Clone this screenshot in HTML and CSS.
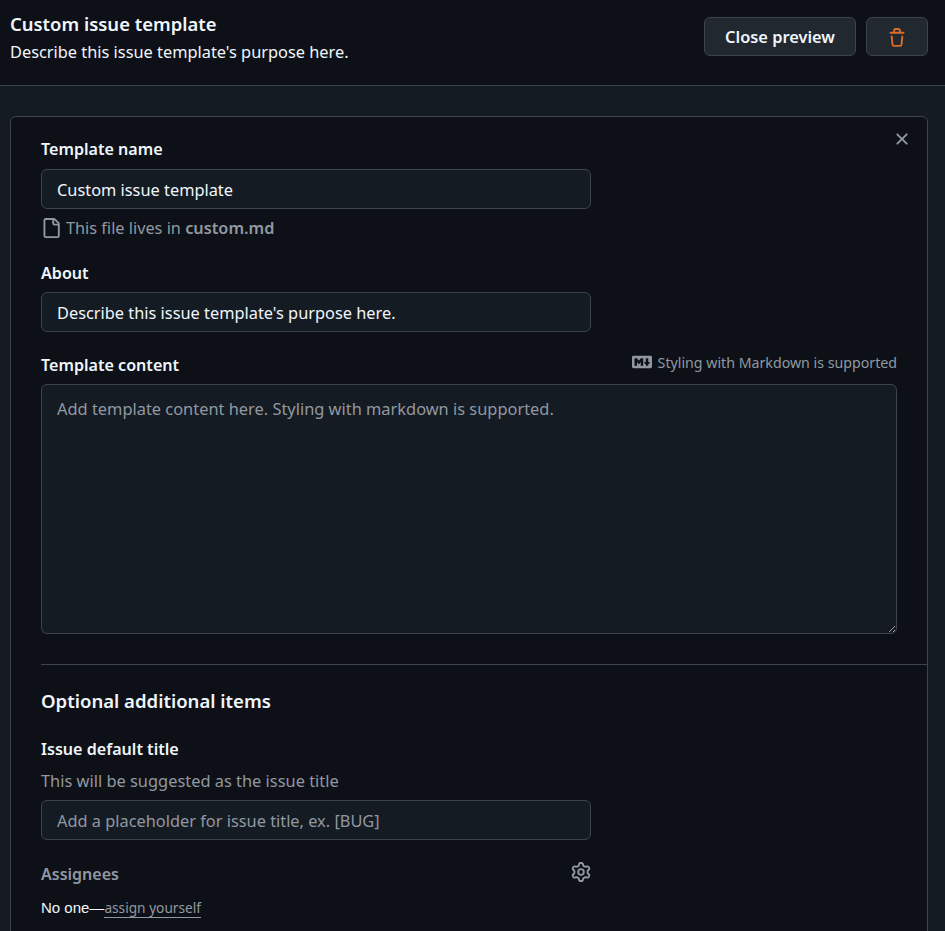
FILE: index.html
```html
<!DOCTYPE html>
<html lang="en">
<head>
  <meta charset="UTF-8" />
  <meta name="viewport" content="width=device-width, initial-scale=1.0" />
  <title>Custom issue template</title>
  <link rel="stylesheet" href="styles.css">
</head>
<body>

  <header class="top">
    <div class="top-text">
      <h1>Custom issue template</h1>
      <p>Describe this issue template's purpose here.</p>
    </div>
    <div class="top-actions">
      <button class="btn">Close preview</button>
      <button class="btn btn-trash" aria-label="Delete">
        <svg viewBox="0 0 16 16" width="20" height="20"><path d="M11 1.75V3h2.25a.75.75 0 0 1 0 1.5H2.75a.75.75 0 0 1 0-1.5H5V1.75C5 .784 5.784 0 6.75 0h2.5C10.216 0 11 .784 11 1.75ZM4.496 6.675l.66 6.6a.25.25 0 0 0 .249.225h5.19a.25.25 0 0 0 .249-.225l.66-6.6a.75.75 0 0 1 1.492.149l-.66 6.6A1.748 1.748 0 0 1 10.595 15h-5.19a1.75 1.75 0 0 1-1.741-1.575l-.66-6.6a.75.75 0 1 1 1.492-.15ZM6.5 1.75V3h3V1.75a.25.25 0 0 0-.25-.25h-2.5a.25.25 0 0 0-.25.25Z"/></svg>
      </button>
    </div>
  </header>

  <main class="inset">
    <form class="card">
      <button type="button" class="close" aria-label="Close">
        <svg viewBox="0 0 16 16" width="20" height="20"><path d="M3.72 3.72a.75.75 0 0 1 1.06 0L8 6.94l3.22-3.22a.749.749 0 0 1 1.275.326.749.749 0 0 1-.215.734L9.06 8l3.22 3.22a.749.749 0 0 1-.326 1.275.749.749 0 0 1-.734-.215L8 9.06l-3.22 3.22a.751.751 0 0 1-1.042-.018.751.751 0 0 1-.018-1.042L6.94 8 3.72 4.78a.75.75 0 0 1 0-1.06Z"/></svg>
      </button>

      <div class="fields">
        <label class="label">Template name</label>
        <input class="input" type="text" value="Custom issue template" />
        <p class="file-note">
          <svg viewBox="0 0 16 16" width="20" height="20"><path d="M2 1.75C2 .784 2.784 0 3.75 0h6.586c.464 0 .909.184 1.237.513l2.914 2.914c.329.328.513.773.513 1.237v9.586A1.75 1.75 0 0 1 13.25 16h-9.5A1.75 1.75 0 0 1 2 14.25Zm1.75-.25a.25.25 0 0 0-.25.25v12.5c0 .138.112.25.25.25h9.5a.25.25 0 0 0 .25-.25V6h-2.75A1.75 1.75 0 0 1 9 4.25V1.5Zm6.75.062V4.25c0 .138.112.25.25.25h2.688l-.011-.013-2.914-2.914-.013-.011Z"/></svg>
          <span>This file lives in <b>custom.md</b></span>
        </p>

        <label class="label label-about">About</label>
        <input class="input" type="text" value="Describe this issue template's purpose here." />

        <div class="content-head">
          <label class="label">Template content</label>
          <span class="md-note">
            <svg viewBox="0 0 16 16" width="20" height="20"><path d="M14.85 3c.63 0 1.15.52 1.14 1.15v7.7c0 .63-.51 1.15-1.15 1.15H1.15C.52 13 0 12.48 0 11.84V4.15C0 3.52.52 3 1.15 3ZM9 11V5H7L5.5 7 4 5H2v6h2V8l1.5 1.92L7 8v3Zm2.99.5L14.5 8H13V5h-2v3H9.5Z"/></svg>
            Styling with Markdown is supported
          </span>
        </div>
        <textarea class="input area" placeholder="Add template content here. Styling with markdown is supported."></textarea>
      </div>

      <hr class="rule" />

      <div class="fields">
        <h2>Optional additional items</h2>
        <label class="label">Issue default title</label>
        <p class="hint">This will be suggested as the issue title</p>
        <input class="input" type="text" placeholder="Add a placeholder for issue title, ex. [BUG]" />

        <div class="assign-head">
          <span class="assign-title">Assignees</span>
          <svg viewBox="0 0 16 16" width="20" height="20"><path d="M8 0a8.2 8.2 0 0 1 .701.031C9.444.095 9.99.645 10.16 1.29l.288 1.107c.018.066.079.158.212.224.231.114.454.243.668.386.123.082.233.09.299.071l1.103-.303c.644-.176 1.392.021 1.82.63.27.385.506.792.704 1.218.315.675.111 1.422-.364 1.891l-.814.806c-.049.048-.098.147-.088.294.016.257.016.515 0 .772-.01.147.038.246.088.294l.814.806c.475.469.679 1.216.364 1.891a7.977 7.977 0 0 1-.704 1.217c-.428.61-1.176.807-1.82.63l-1.102-.302c-.067-.019-.177-.011-.3.071a5.909 5.909 0 0 1-.668.386c-.133.066-.194.158-.211.224l-.29 1.106c-.168.646-.715 1.196-1.458 1.26a8.006 8.006 0 0 1-1.402 0c-.743-.064-1.289-.614-1.458-1.26l-.289-1.106c-.018-.066-.079-.158-.212-.224a5.738 5.738 0 0 1-.668-.386c-.123-.082-.233-.09-.299-.071l-1.103.303c-.644.176-1.392-.021-1.82-.63a8.12 8.12 0 0 1-.704-1.218c-.315-.675-.111-1.422.363-1.891l.815-.806c.05-.048.098-.147.088-.294a6.214 6.214 0 0 1 0-.772c.01-.147-.038-.246-.088-.294l-.815-.806C.635 6.045.431 5.298.746 4.623a7.92 7.92 0 0 1 .704-1.217c.428-.61 1.176-.807 1.82-.63l1.102.302c.067.019.177.011.3-.071.214-.143.437-.272.668-.386.133-.066.194-.158.211-.224l.29-1.106C6.009.645 6.556.095 7.299.03 7.53.01 7.764 0 8 0Zm-.571 1.525c-.036.003-.108.036-.137.146l-.289 1.105c-.147.561-.549.967-.998 1.189-.173.086-.34.183-.5.29-.417.278-.97.423-1.529.27l-1.103-.303c-.109-.03-.175.016-.195.045-.22.312-.412.644-.573.99-.014.031-.021.11.059.19l.815.806c.411.406.562.957.53 1.456a4.709 4.709 0 0 0 0 .582c.032.499-.119 1.05-.53 1.456l-.815.806c-.081.08-.073.159-.059.19.162.346.353.677.573.989.02.03.085.076.195.046l1.102-.303c.56-.153 1.113-.008 1.53.27.161.107.328.204.501.29.447.222.85.629.997 1.189l.289 1.105c.029.109.101.143.137.146a6.6 6.6 0 0 0 1.142 0c.036-.003.108-.036.137-.146l.289-1.105c.147-.561.549-.967.998-1.189.173-.086.34-.183.5-.29.417-.278.97-.423 1.529-.27l1.103.303c.109.029.175-.016.195-.045.22-.313.411-.644.573-.99.014-.031.021-.11-.059-.19l-.815-.806c-.411-.406-.562-.957-.53-1.456a4.709 4.709 0 0 0 0-.582c-.032-.499.119-1.05.53-1.456l.815-.806c.081-.08.073-.159.059-.19a6.464 6.464 0 0 0-.573-.989c-.02-.03-.085-.076-.195-.046l-1.102.303c-.56.153-1.113.008-1.53-.27a4.44 4.44 0 0 0-.501-.29c-.447-.222-.85-.629-.997-1.189l-.289-1.105c-.029-.11-.101-.143-.137-.146a6.6 6.6 0 0 0-1.142 0ZM11 8a3 3 0 1 1-6 0 3 3 0 0 1 6 0ZM9.5 8a1.5 1.5 0 1 0-3.001.001A1.5 1.5 0 0 0 9.5 8Z"/></svg>
        </div>
        <p class="assign-line">No one—<a href="#">assign yourself</a></p>
      </div>
    </form>
  </main>

</body>
</html>
```

FILE: styles.css
```css
* {
  box-sizing: border-box;
  font-family: 'Noto Sans', 'Liberation Sans', sans-serif;
}
html, body {
  height: 100%;
  overflow: hidden;
}
body {
  margin: 0;
  display: flex;
  flex-direction: column;
  background: #0d1117;
  color: #f0f6fc;
  font-size: 16px;
}
p {
  margin: 0;
}

/* top bar */
.top {
  height: 86px;
  flex: none;
  display: flex;
  justify-content: space-between;
  padding: 12px 17px 0 10px;
  border-bottom: 1px solid #3d444d;
}
.top h1 {
  margin: 0 0 4px;
  font-size: 18.45px;
  line-height: 24px;
  font-weight: 600;
}
.top p {
  font-size: 16.35px;
  line-height: 24px;
}
.top-actions {
  display: flex;
  gap: 10px;
  padding-top: 5px;
}
.btn {
  height: 39px;
  width: 152px;
  padding: 0;
  background: #212830;
  border: 1px solid #3d444d;
  border-radius: 6px;
  color: #f0f6fc;
  font-size: 16.4px;
  font-weight: 600;
}
.btn-trash {
  width: 62px;
}
.btn-trash svg {
  fill: #db6d28;
  vertical-align: middle;
}

/* inset panel */
.inset {
  flex: 1;
  min-height: 0;
  overflow: hidden;
  background: #151b23;
  padding: 30px 17px 0 10px;
}
.card {
  position: relative;
  background: #0d1117;
  border: 1px solid #3d444d;
  border-radius: 6px;
  padding: 20px 0 60px;
}
.close {
  position: absolute;
  top: 12px;
  right: 15px;
  padding: 0;
  background: none;
  border: none;
  line-height: 0;
}
.close svg {
  fill: #9198a1;
}
.fields {
  padding: 0 30px;
}
.label {
  display: block;
  font-size: 16.1px;
  line-height: 24px;
  font-weight: 600;
}
.input {
  display: block;
  width: 550px;
  height: 40px;
  margin-top: 8px;
  padding: 2px 15px 0;
  background: #151b23;
  border: 1px solid #3d444d;
  border-radius: 6px;
  color: #f0f6fc;
  font-size: 16.35px;
  outline: none;
}
.input::placeholder {
  color: #9198a1;
  opacity: 1;
}
.area {
  width: 100%;
  height: 250px;
  margin-top: 7px;
  padding: 12px 15px;
  font-size: 16.4px;
  line-height: 24px;
}
.file-note {
  display: flex;
  align-items: center;
  gap: 5px;
  height: 24px;
  margin-top: 7px;
  color: #9198a1;
  font-size: 16.3px;
}
.file-note svg {
  fill: #9198a1;
}
.file-note b {
  font-weight: 600;
}
.label-about {
  margin-top: 21px;
}
.label-about + .input {
  margin-top: 7px;
}
.content-head {
  display: flex;
  justify-content: space-between;
  align-items: flex-start;
  margin-top: 21px;
}
.md-note {
  display: flex;
  align-items: center;
  gap: 6px;
  height: 20px;
  margin-top: -1px;
  color: #9198a1;
  font-size: 14.2px;
}
.md-note svg {
  fill: #9198a1;
}
.rule {
  height: 1px;
  margin: 30px 0 0 30px;
  border: none;
  background: #3d444d;
}
h2 {
  margin: 22px 0 0;
  font-size: 18.55px;
  line-height: 28px;
  font-weight: 600;
}
h2 + .label {
  margin-top: 22px;
}
.hint {
  margin-top: 8px;
  color: #9198a1;
  font-size: 16.4px;
  line-height: 24px;
}
.hint + .input {
  margin-top: 7px;
}
.assign-head {
  display: flex;
  justify-content: space-between;
  align-items: center;
  width: 550px;
  margin-top: 22px;
}
.assign-title {
  color: #9198a1;
  font-size: 16px;
  font-weight: 600;
  line-height: 24px;
}
.assign-head svg {
  fill: #9198a1;
  margin-bottom: 4px;
}
.assign-line {
  margin-top: 12px;
  font-family: 'Liberation Sans', sans-serif;
  font-size: 15px;
  line-height: 20px;
}
.assign-line a {
  color: #9198a1;
  text-decoration: none;
  border-bottom: 1px solid #9198a1;
  font-family: 'Noto Sans', sans-serif;
  font-size: 13.7px;
}
```
